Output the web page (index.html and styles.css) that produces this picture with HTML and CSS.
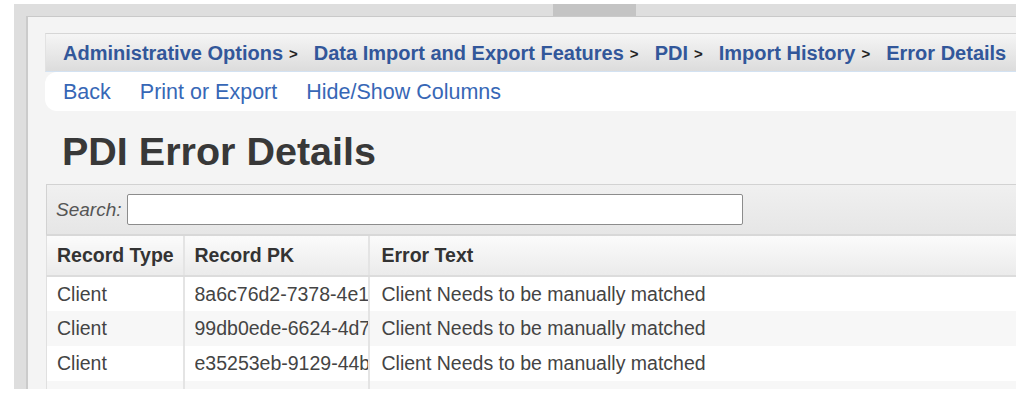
FILE: index.html
```html
<!DOCTYPE html>
<html>
<head>
<meta charset="utf-8">
<link rel="stylesheet" href="styles.css">
</head>
<body>
<div class="frame">
  <div class="thumb"></div>
  <div class="inner">
    <div class="panel">
      <div class="crumbs">
        <a class="crumb">Administrative Options</a><span class="sep">&gt;</span>
        <a class="crumb">Data Import and Export Features</a><span class="sep">&gt;</span>
        <a class="crumb">PDI</a><span class="sep">&gt;</span>
        <a class="crumb">Import History</a><span class="sep">&gt;</span>
        <a class="crumb">Error Details</a>
      </div>
      <div class="links">
        <a class="link">Back</a>
        <a class="link">Print or Export</a>
        <a class="link">Hide/Show Columns</a>
      </div>
      <h1 class="title">PDI Error Details</h1>
      <div class="grid">
        <div class="searchbar">
          <label class="search-label">Search:</label>
          <input class="search-input" type="text">
        </div>
        <table class="data">
          <colgroup><col class="c1"><col class="c2"><col class="c3"></colgroup>
          <thead>
            <tr><th>Record Type</th><th>Record PK</th><th>Error Text</th></tr>
          </thead>
          <tbody>
            <tr><td>Client</td><td><span class="pk">8a6c76d2-7378-4e1b</span></td><td>Client Needs to be manually matched</td></tr>
            <tr class="alt"><td>Client</td><td><span class="pk">99db0ede-6624-4d7a</span></td><td>Client Needs to be manually matched</td></tr>
            <tr><td>Client</td><td><span class="pk">e35253eb-9129-44bf</span></td><td>Client Needs to be manually matched</td></tr>
            <tr class="alt"><td>&nbsp;</td><td>&nbsp;</td><td>&nbsp;</td></tr>
          </tbody>
        </table>
      </div>
    </div>
  </div>
</div>
</body>
</html>
```

FILE: styles.css
```css
html, body {
  margin: 0;
  padding: 0;
  background: #ffffff;
  font-family: "Liberation Sans", Arial, sans-serif;
}

.frame {
  position: relative;
  margin: 4px 0 0 14px;
  height: 385px;
  box-sizing: border-box;
  padding: 12px 0 0 12px;
  background: #dedede;
  overflow: hidden;
}

.thumb {
  position: absolute;
  top: 0;
  left: 539px;
  width: 83px;
  height: 12px;
  background: #c4c4c4;
}

.inner {
  height: 100%;
  box-sizing: border-box;
  background: #f4f4f4;
  border-top: 1px solid #c9c9c9;
  border-left: 2px solid #cbcbcb;
  padding: 16px 0 0 17px;
  overflow: hidden;
}

.panel {
  width: 1100px;
}

.crumbs {
  height: 39px;
  box-sizing: border-box;
  display: flex;
  align-items: center;
  padding: 2px 0 0 17px;
  white-space: nowrap;
  background: linear-gradient(#f5f5f5, #dcdcdc);
  border-top: 1px solid #d6d6d6;
  border-left: 1px solid #e2e2e2;
  border-bottom: 1px solid #d3e2f2;
}

.crumb {
  font-size: 20px;
  font-weight: bold;
  color: #32579a;
}

.sep {
  font-size: 15px;
  font-weight: bold;
  color: #222;
  margin: 0 16px 0 6px;
}

.links {
  height: 39px;
  box-sizing: border-box;
  display: flex;
  align-items: center;
  padding: 2px 0 0 18px;
  background: #ffffff;
  border-radius: 12px 0 0 12px;
  white-space: nowrap;
}

.link {
  font-size: 21.5px;
  color: #3767b6;
  margin-right: 29px;
}

.title {
  margin: 20px 0 13px 17px;
  font-size: 39.5px;
  line-height: 40px;
  font-weight: bold;
  color: #383838;
}

.grid {
  margin-left: 1px;
}

.searchbar {
  height: 52px;
  box-sizing: border-box;
  display: flex;
  align-items: center;
  padding-left: 9px;
  background: linear-gradient(#f0f0f0, #e6e6e6);
  border: 1px solid #d2d2d2;
  border-bottom: 2px solid #d8d8d8;
}

.search-label {
  font-size: 19px;
  font-style: italic;
  color: #555;
  margin-right: 6px;
}

.search-input {
  width: 616px;
  height: 31px;
  box-sizing: border-box;
  border: 1px solid #8c8c8c;
  border-radius: 2px;
  background: #fff;
  margin: 0;
}

.data {
  width: 100%;
  border-collapse: collapse;
  table-layout: fixed;
  font-size: 19.5px;
}

.c1 { width: 137px; }
.c2 { width: 185px; }

.data th {
  height: 40px;
  box-sizing: border-box;
  text-align: left;
  font-weight: bold;
  color: #333;
  padding: 0 0 0 10px;
  background: linear-gradient(#fbfbfb, #ebebeb);
  border-left: 2px solid #e4e4e4;
  border-bottom: 2px solid #dcdcdc;
  white-space: nowrap;
  overflow: hidden;
}

.data td {
  height: 35px;
  box-sizing: border-box;
  padding: 0 0 0 10px;
  color: #444;
  background: #ffffff;
  border-left: 2px solid #e4e4e4;
  white-space: nowrap;
  overflow: hidden;
}

.pk {
  display: block;
  width: 173px;
  overflow: hidden;
}

.data tr.alt td {
  background: #f7f7f7;
}

.data th:first-child,
.data td:first-child {
  border-left: 1px solid #e0e0e0;
}

.data td:nth-child(3),
.data th:nth-child(3) {
  padding-left: 12px;
}
```
